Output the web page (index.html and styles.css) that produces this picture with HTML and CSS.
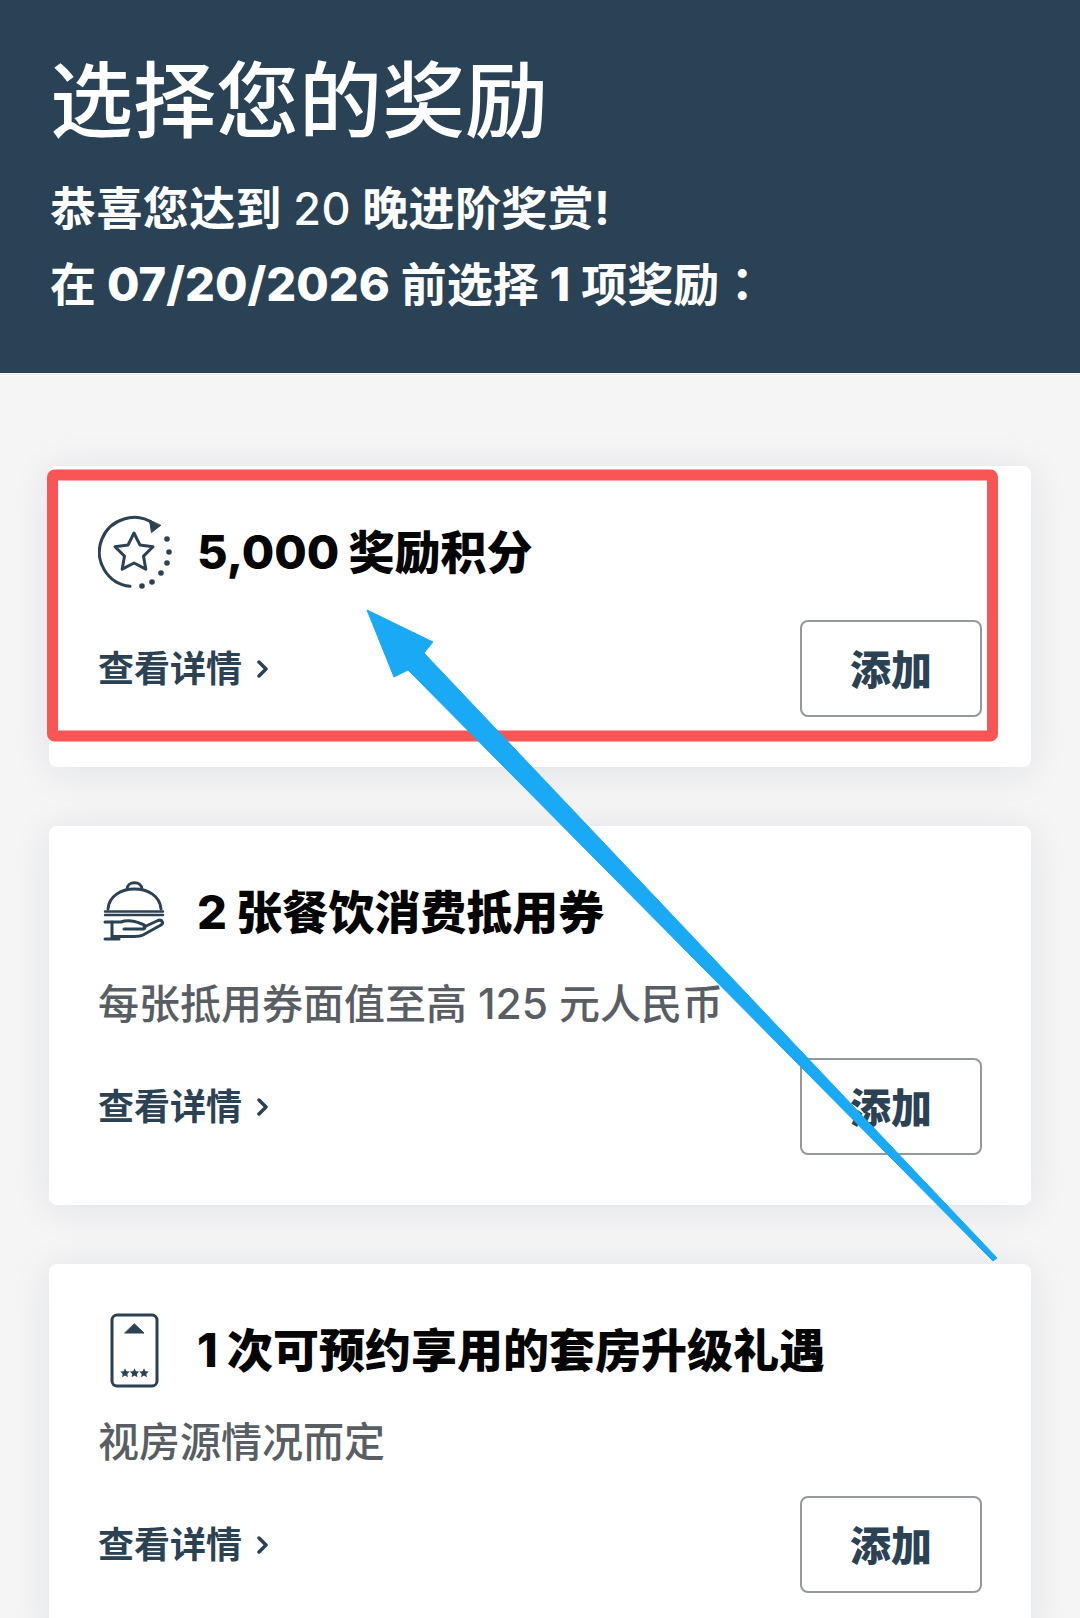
FILE: index.html
```html
<!DOCTYPE html>
<html lang="zh-CN">
<head>
<meta charset="utf-8">
<title>选择您的奖励</title>
<link rel="stylesheet" href="styles.css">
</head>
<body>
<div class="page">
  <header class="hero">
    <h1 class="hero-title">选择您的奖励</h1>
    <p class="hero-line hero-line-first">恭喜您达到 <span class="num-light">20</span> 晚进阶奖赏!</p>
    <p class="hero-line">在 <span class="num-bold">07/20/2026</span> 前选择 <span class="num-bold">1</span> 项奖励<span class="colon" lang="zh-TW">：</span></p>
  </header>
  <main class="list">
    <section class="card">
      <div class="card-head">
        <svg class="icon" viewBox="0 0 76 76" fill="none" stroke="#2b4254" stroke-width="3" stroke-linecap="round" stroke-linejoin="round">
          <path d="M32 72.300A34.500 34.500 0 1 1 56 10"/>
          <path d="M62.500 11.500L53.500 18.500L51.500 6.500Z" fill="#2b4254" stroke-width="1"/>
          <path d="M36 19L41.900 30.900L55 32.800L45.500 42.100L47.800 55.200L36 49L24.200 55.200L26.500 42.100L17 32.800L30.100 30.900Z"/>
          <g fill="#2b4254" stroke="none">
            <circle cx="69" cy="25" r="2.800"/><circle cx="71" cy="38" r="2.800"/><circle cx="69" cy="49" r="2.800"/>
            <circle cx="63" cy="59" r="2.800"/><circle cx="54" cy="68" r="2.800"/><circle cx="44" cy="72" r="2.800"/>
          </g>
        </svg>
        <h2 class="card-title"><span class="latin">5,000</span> 奖励积分</h2>
      </div>
      <div class="card-foot">
        <a class="details">查看详情<svg class="chev" viewBox="0 0 12 20" fill="none" stroke="#2b4254" stroke-width="3.500" stroke-linecap="round" stroke-linejoin="round"><path d="M3 3l7 7-7 7"/></svg></a>
        <button class="add">添加</button>
      </div>
    </section>
    <section class="card">
      <div class="card-head">
        <svg class="icon" viewBox="0 0 76 76" fill="none" stroke="#2b4254" stroke-width="3" stroke-linecap="round" stroke-linejoin="round">
          <path d="M10 35C11 22 23 15 36.500 15S62 22 63 35"/>
          <path d="M29 15.500C29 6.500 44 6.500 44 15.500"/>
          <path d="M7 37.500H65M7 41H65" stroke-width="2.400"/>
          <path d="M7 48H23C30 45 37 47 44 50C48 51 48 55 44 55H26"/>
          <path d="M46 53L60 46.500C64 45 66 49 63 51L45 61C42 62.500 40 62.500 36 62.500H15"/>
          <path d="M14 48V65M7 65H21"/>
        </svg>
        <h2 class="card-title"><span class="latin">2</span> 张餐饮消费抵用券</h2>
      </div>
      <p class="card-desc">每张抵用券面值至高 <span class="latin-reg">125</span> 元人民币</p>
      <div class="card-foot">
        <a class="details">查看详情<svg class="chev" viewBox="0 0 12 20" fill="none" stroke="#2b4254" stroke-width="3.500" stroke-linecap="round" stroke-linejoin="round"><path d="M3 3l7 7-7 7"/></svg></a>
        <button class="add">添加</button>
      </div>
    </section>
    <section class="card">
      <div class="card-head">
        <svg class="icon" viewBox="0 0 76 76" fill="none" stroke="#2b4254" stroke-width="3" stroke-linecap="round" stroke-linejoin="round">
          <rect x="14" y="3" width="45" height="71" rx="5"/>
          <path d="M36.500 12L46 21H27Z" fill="#2b4254" stroke-width="1"/>
          <g fill="#2b4254" stroke="none">
            <path d="M27 56.200l1.400 3 3.300.400-2.400 2.300.600 3.300-2.900-1.600-2.900 1.600.600-3.300-2.400-2.300 3.300-.400Z"/>
            <path d="M36.500 56.200l1.400 3 3.300.400-2.400 2.300.600 3.300-2.900-1.600-2.900 1.600.600-3.300-2.400-2.300 3.300-.400Z"/>
            <path d="M46 56.200l1.400 3 3.300.400-2.400 2.300.600 3.300-2.900-1.600-2.900 1.600.600-3.300-2.400-2.300 3.300-.400Z"/>
          </g>
        </svg>
        <h2 class="card-title"><span class="latin">1</span> 次可预约享用的套房升级礼遇</h2>
      </div>
      <p class="card-desc">视房源情况而定</p>
      <div class="card-foot">
        <a class="details">查看详情<svg class="chev" viewBox="0 0 12 20" fill="none" stroke="#2b4254" stroke-width="3.500" stroke-linecap="round" stroke-linejoin="round"><path d="M3 3l7 7-7 7"/></svg></a>
        <button class="add">添加</button>
      </div>
    </section>
  </main>
  <svg class="markup" viewBox="0 0 1080 1618" aria-hidden="true">
    <rect class="markup-box" x="52.500" y="475" width="940" height="261" rx="2"/>
    <path class="markup-arrow" d="M367 610L433 642L424 653L997 1258L993 1261L408 670L394 677Z"/>
  </svg>
</div>
</body>
</html>
```
FILE: styles.css
```css
* { box-sizing: border-box; }
html, body { margin: 0; padding: 0; }
body {
  font-family: "Inter", "Noto Sans CJK SC", sans-serif;
  background: #f5f5f6;
}
.page {
  position: relative;
  width: 1080px;
  height: 1618px;
  overflow: hidden;
  background: #f5f5f6;
}
.hero {
  height: 373px;
  padding: 51px 50px 0;
  background: #2a4256;
  color: #fff;
}
.hero-title {
  margin: 0 0 19px;
  font-size: 83px;
  line-height: 100px;
  font-weight: 500;
}
.hero-line {
  margin: 0;
  font-size: 46px;
  line-height: 76px;
  font-weight: 700;
}
.hero-line-first { letter-spacing: 0.4px; }
.num-light { font-size: 45px; line-height: 1; font-weight: 500; }
.num-bold { font-size: 47px; line-height: 1; font-weight: 800; }
.colon { font-family: "Noto Sans CJK TC", sans-serif; line-height: 1; }
.list {
  display: flex;
  flex-direction: column;
  gap: 59px;
  padding: 93px 49px 0;
}
.card {
  flex: none;
  padding: 48px 49px 50px;
  background: #fff;
  border-radius: 8px;
  box-shadow: 0 4px 40px rgba(20, 30, 40, 0.09);
}
.card-head {
  display: flex;
  align-items: center;
  height: 76px;
}
.icon {
  flex: none;
  width: 76px;
  height: 76px;
  margin-right: 23px;
}
.card-title {
  margin: 0;
  font-size: 46px;
  line-height: 60px;
  font-weight: 900;
  color: #050505;
}
.latin { font-size: 47px; line-height: 1; font-weight: 800; }
.card-desc {
  margin: 32px 0;
  font-size: 41px;
  line-height: 44px;
  font-weight: 500;
  color: #585e63;
}
.latin-reg { font-size: 42.5px; line-height: 1; font-weight: 500; }
.card-foot {
  display: flex;
  align-items: center;
  justify-content: space-between;
  margin-top: 30px;
}
.card-desc + .card-foot { margin-top: 0; }
.details {
  display: flex;
  align-items: center;
  font-size: 36px;
  line-height: 44px;
  font-weight: 700;
  color: #2b4254;
}
.chev {
  width: 12px;
  height: 20px;
  margin-left: 14px;
}
.add {
  width: 182px;
  height: 97px;
  padding: 0 0 3px;
  font-family: inherit;
  font-size: 41px;
  font-weight: 900;
  color: #2b4254;
  background: #fff;
  border: 2px solid #96999b;
  border-radius: 8px;
}
.markup {
  position: absolute;
  left: 0;
  top: 0;
  width: 1080px;
  height: 1618px;
}
.markup-box {
  fill: none;
  stroke: #f95555;
  stroke-width: 11px;
}
.markup-arrow {
  fill: #1aa9f5;
  stroke: #1aa9f5;
  stroke-width: 1px;
  stroke-linejoin: round;
}
```
